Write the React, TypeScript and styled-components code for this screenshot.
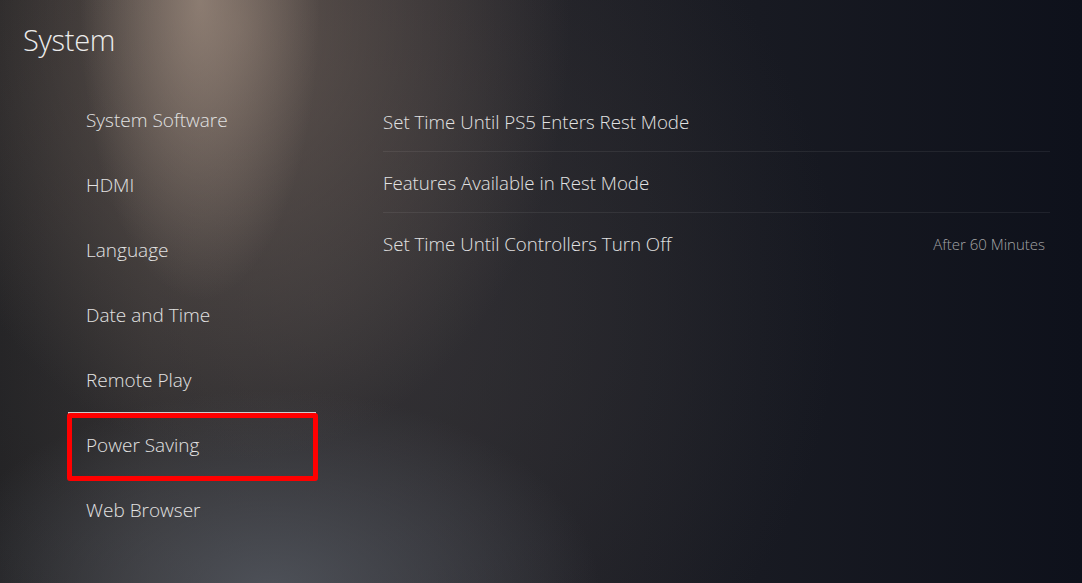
import React from "react";
import styled, {createGlobalStyle} from "styled-components";

const GlobalStyle = createGlobalStyle`
  html, body {
    margin: 0;
    padding: 0;
    width: 1082px;
    height: 583px;
    overflow: hidden;
    background: #15171f;
  }
  * {
    box-sizing: border-box;
  }
`;

const navItems = [
    "System Software",
    "HDMI",
    "Language",
    "Date and Time",
    "Remote Play",
    "Power Saving",
    "Web Browser",
];

const settings = [
    {label: "Set Time Until PS5 Enters Rest Mode"},
    {label: "Features Available in Rest Mode"},
    {label: "Set Time Until Controllers Turn Off", value: "After 60 Minutes"},
];

function App() {
    const selected = "Power Saving";
    return (
        <Screen>
            <GlobalStyle/>
            <Title>System</Title>
            <Body>
                <Nav>
                    {navItems.map(item =>
                        <NavItem key={item} $active={item === selected}>
                            {item}
                        </NavItem>
                    )}
                </Nav>
                <Panel>
                    {settings.map((s, index) =>
                        <Row key={s.label} $last={index === settings.length - 1}>
                            <span>{s.label}</span>
                            {s.value && <Value>{s.value}</Value>}
                        </Row>
                    )}
                </Panel>
            </Body>
        </Screen>
    );
}

const Screen = styled.div`
  width: 1082px;
  height: 583px;
  overflow: hidden;
  font-family: "Open Sans", "Noto Sans", sans-serif;
  font-weight: 300;
  color: #e4e4e4;
  background:
    radial-gradient(ellipse 120px 300px at 200px 0px, rgba(175, 155, 140, 0.6), rgba(175, 155, 140, 0) 100%),
    radial-gradient(ellipse 330px 430px at 240px 30px, rgba(125, 108, 98, 0.6), rgba(125, 108, 98, 0) 100%),
    radial-gradient(ellipse 330px 200px at 270px 590px, rgba(88, 93, 102, 0.75), rgba(88, 93, 102, 0) 100%),
    radial-gradient(ellipse 520px 520px at 320px 300px, rgba(60, 58, 60, 0.6), rgba(60, 58, 60, 0) 100%),
    linear-gradient(90deg, #1f1f21 0%, #2b292a 14%, #26252a 40%, #181a22 70%, #0e111b 100%);
`;

const Title = styled.h1`
  margin: 0;
  padding: 20px 0 0 23px;
  height: 87px;
  font-size: 29px;
  line-height: 40px;
  font-weight: 300;
  color: #ececec;
  letter-spacing: -0.3px;
`;

const Body = styled.div`
  display: flex;
`;

const Nav = styled.nav`
  width: 251px;
  margin-left: 67px;
  display: flex;
  flex-direction: column;
`;

const NavItem = styled.div<{ $active?: boolean }>`
  position: relative;
  height: 65px;
  display: flex;
  align-items: center;
  padding-left: 19px;
  font-size: 19px;
  color: #e2e2e2;

  ${p => p.$active && `
    &::before {
      content: "";
      position: absolute;
      left: 1px;
      right: 2px;
      top: 0;
      height: 2px;
      background: rgba(255, 255, 255, 0.75);
    }
    &::after {
      content: "";
      position: absolute;
      left: 0;
      right: 0;
      top: 1px;
      bottom: -4px;
      border: 5px solid #ff0000;
      border-radius: 3px;
    }
  `}
`;

const Panel = styled.section`
  margin-left: 65px;
  margin-top: 4px;
  width: 667px;
  display: flex;
  flex-direction: column;
`;

const Row = styled.div<{ $last?: boolean }>`
  height: 61px;
  display: flex;
  align-items: center;
  justify-content: space-between;
  font-size: 18.7px;
  color: #e2e2e2;
  border-bottom: ${p => p.$last ? "none" : "1px solid rgba(255, 255, 255, 0.07)"};
`;

const Value = styled.span`
  font-size: 15px;
  color: #a4a4a6;
  padding-right: 5px;
`;

export default App;
